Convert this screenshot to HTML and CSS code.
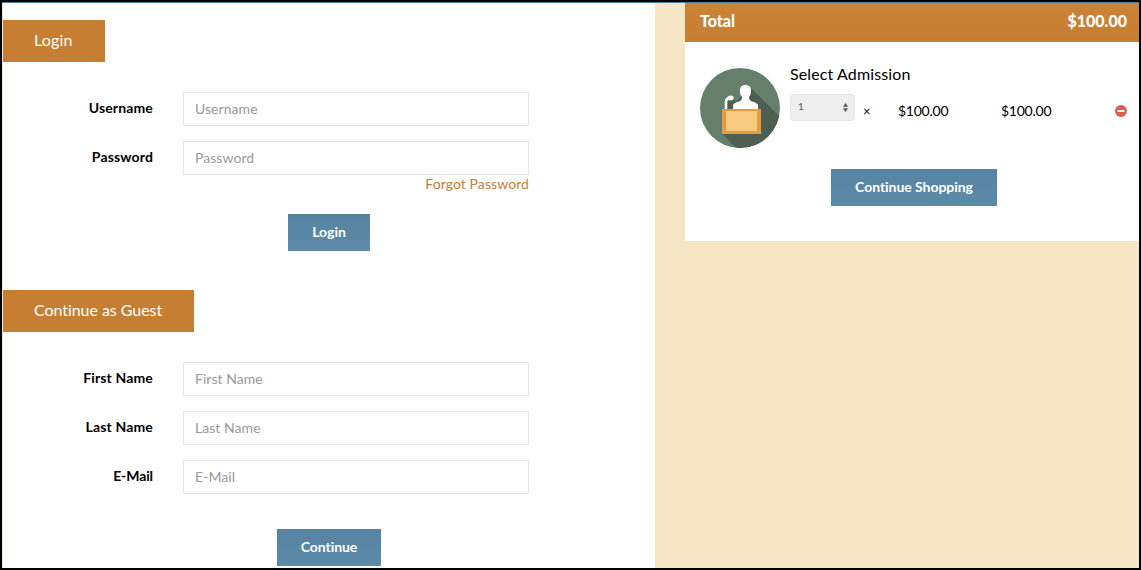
FILE: index.html
```
<!DOCTYPE html>
<html lang="en">
<head>
<meta charset="utf-8">
<title>Checkout</title>
<link rel="stylesheet" href="styles.css">
</head>
<body>
<div class="page">
  <main class="forms">
    <section class="login">
      <h2 class="tab tab-login"><span>Login</span></h2>
      <form class="fields">
        <div class="row"><label for="user">Username</label><input id="user" type="text" placeholder="Username"></div>
        <div class="row"><label for="pass">Password</label><input id="pass" type="password" placeholder="Password"></div>
        <a class="forgot" href="#">Forgot Password</a>
      </form>
      <button class="btn btn-login" type="button">Login</button>
    </section>
    <section class="guest">
      <h2 class="tab tab-guest"><span>Continue as Guest</span></h2>
      <form class="fields">
        <div class="row"><label for="first">First Name</label><input id="first" type="text" placeholder="First Name"></div>
        <div class="row"><label for="last">Last Name</label><input id="last" type="text" placeholder="Last Name"></div>
        <div class="row"><label class="label-mail" for="mail">E-Mail</label><input id="mail" type="text" placeholder="E-Mail"></div>
      </form>
      <button class="btn btn-continue" type="button">Continue</button>
    </section>
  </main>
  <aside class="cart">
    <header class="total"><span class="total-label">Total</span><span class="total-price">$100.00</span></header>
    <div class="item">
      <svg class="thumb" viewBox="0 0 80 80">
        <defs><clipPath id="disc"><circle cx="40" cy="40" r="40"/></clipPath></defs>
        <circle cx="40" cy="40" r="40" fill="#657f6a"/>
        <path clip-path="url(#disc)" fill="#4e5e50" d="M50 19L82 51V82H38L22.500 66L25 41L31 29L36 34Z"/>
        <path fill="none" stroke="#fff" stroke-width="2.600" d="M26 42V34Q26 30.500 30 29.500"/>
        <ellipse cx="30.700" cy="30" rx="2.900" ry="2.400" fill="#fff"/>
        <path fill="#fff" d="M33 42V37Q33.500 35 39 33.500Q42 32.500 42 29Q40 27 40 24C39.500 19.500 41.500 17 45.500 17S51.500 19.500 51 24Q51 27 49 29Q49 32.500 52 33.500Q57.500 35 58 37V42Z"/>
        <rect x="22" y="41" width="39" height="25" fill="#e99c3a"/>
        <rect x="26" y="43" width="31" height="20" fill="#f7c981"/>
      </svg>
      <div class="details">
        <h3 class="name">Select Admission</h3>
        <div class="line">
          <div class="qty"><span>1</span>
            <svg class="arrows" viewBox="0 0 5 9"><path fill="#555" d="M0 3.700L2.500 0L5 3.700ZM0 5.300H5L2.500 9Z"/></svg>
          </div>
          <span class="times">×</span>
          <span class="price unit">$100.00</span>
          <span class="price sum">$100.00</span>
          <svg class="remove" viewBox="0 0 12 12"><circle cx="6" cy="6" r="6" fill="#d9604c"/><rect x="2.500" y="5" width="7" height="2" fill="#fff"/></svg>
        </div>
      </div>
    </div>
    <button class="btn btn-shop" type="button">Continue Shopping</button>
  </aside>
</div>
</body>
</html>
```
FILE: styles.css
```
* { box-sizing: border-box; }
body { margin: 0; font-family: Lato, "Liberation Sans", sans-serif; font-size: 15px; color: #000; font-variant-ligatures: none; }
h2, h3 { margin: 0; font-weight: 400; }
.page { display: flex; align-items: flex-start; gap: 30px; width: 1141px; height: 570px; overflow: hidden; border: 2px solid #000; background: #f6e6c6; padding-left: 1px; box-shadow: inset 0 1px 0 #4c8099; padding-top: 1px; }
.forms { width: 652px; height: 565px; background: #fff; padding-top: 17px; }
.tab { display: flex; align-items: center; height: 42px; padding: 0 0 3px 31px; background: #c67e33; color: #fff; font-size: 16px; }
.tab-login { width: 102px; letter-spacing: .2px; }
.tab-guest { width: 191px; letter-spacing: -.05px; }
.fields { display: flex; flex-direction: column; gap: 15px; width: 526px; padding-top: 30px; }
.row { display: flex; align-items: center; gap: 30px; height: 34px; }
.row label { width: 150px; text-align: right; font-size: 14px; font-weight: 700; line-height: 20px; margin-top: -2px; letter-spacing: .15px; }
.row .label-mail { letter-spacing: -.1px; }
.row input { width: 346px; height: 34px; padding: 0 11px 2px; border: 1px solid #e5e7e9; border-radius: 0; background: #fff; font: 14px Lato, "Liberation Sans", sans-serif; letter-spacing: .05px; outline: 0; }
.row input::placeholder { color: #999; opacity: 1; }
.forgot { align-self: flex-end; margin-top: -15px; height: 20px; line-height: 17px; font-size: 14px; letter-spacing: .08px; color: #c67e33; text-decoration: none; }
.btn { display: block; height: 37px; border: 0; padding: 0 0 2px; color: #fff; background: linear-gradient(#5783a1, #5c8ba8); font: 700 14px Lato, "Liberation Sans", sans-serif; letter-spacing: -.05px; }
.btn-login { width: 82px; margin: 19px 0 0 285px; }
.guest { padding-top: 39px; }
.btn-continue { width: 104px; margin: 35px 0 0 274px; }
.cart { width: 454px; height: 238px; background: #fff; }
.total { display: flex; align-items: center; justify-content: space-between; height: 39px; padding: 0 12px 4px 15px; background: linear-gradient(#cb8336, #c67e33); color: #fff; font-size: 16px; font-weight: 900; }
.item { display: flex; gap: 10px; padding: 26px 12px 0 15px; }
.thumb { flex: none; width: 80px; height: 80px; }
.details { flex: 1; margin-top: -5px; }
.name { height: 22px; line-height: 22px; font-size: 16px; letter-spacing: .12px; }
.line { display: flex; align-items: center; height: 34px; margin-top: 9px; }
.qty { display: flex; align-items: center; justify-content: space-between; width: 65px; height: 27px; margin-top: -8px; padding: 0 6px 2px 7px; border: 1px solid #e3e5e7; border-radius: 4px; background: #eee; color: #555; font-size: 10px; }
.arrows { width: 5px; height: 9px; margin-top: 2px; }
.times { width: 43px; padding-left: 8px; font-size: 13px; }
.price { width: 103px; font-size: 14px; letter-spacing: -.25px; margin-top: -1px; }
.remove { width: 12px; height: 12px; margin-left: auto; margin-top: -1px; }
.btn-shop { width: 166px; margin: 21px 0 0 146px; }
```
